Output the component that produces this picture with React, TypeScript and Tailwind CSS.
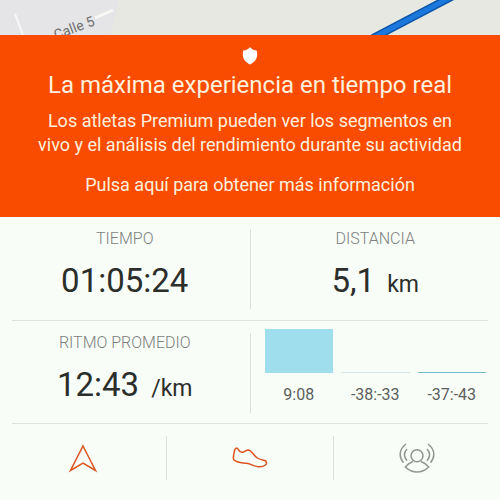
import { useState } from "react";

interface Split {
  pace: string;
  height: number;
  color: string;
}

const splits: Split[] = [
  { pace: "9:08", height: 44, color: "bg-[#9fdfed]" },
  { pace: "-38:-33", height: 1, color: "bg-[#cfe6e4]" },
  { pace: "-37:-43", height: 1, color: "bg-[#6fbfc8]" },
];

function MapStrip() {
  return (
    <svg
      className="block h-[35px] w-full bg-[#e7e8e1]"
      viewBox="0 0 500 35"
      preserveAspectRatio="xMidYMin slice"
      role="img"
      aria-label="Mapa"
    >
      <path d="M0 0H120L110 35H0Z" fill="#e5e5e7" />
      <path d="M15 14L23 35" stroke="#f8f8f8" strokeWidth="2" fill="none" />
      <path d="M95 18L113 10" stroke="#f8f8f5" strokeWidth="3" fill="none" />
      <text
        x="56"
        y="40"
        transform="rotate(-21 56 40)"
        fill="#707070"
        fontSize="14"
        fontFamily="Roboto, sans-serif"
      >
        Calle 5
      </text>
      <path d="M373 38L455 -5" stroke="#0c55a8" strokeWidth="8" fill="none" />
      <path d="M373 38L455 -5" stroke="#1b78dc" strokeWidth="5" fill="none" />
    </svg>
  );
}

function Stat({ label, value, unit }: { label: string; value: string; unit?: string }) {
  return (
    <div className="py-3 text-center">
      <h2 className="text-[16px] font-light leading-5 text-[#7c7f7c]">{label}</h2>
      <p className="mt-2 text-[33px] leading-12 text-[#2b2e2b]">
        {value}
        {unit && <span className="ml-3 text-[23px]">{unit}</span>}
      </p>
    </div>
  );
}

export default function App() {
  const [tab, setTab] = useState("map");

  const tabColor = (name: string) =>
    name === "live" ? "text-[#929592]" : "text-[#dc5420]";

  return (
    <main className="min-h-screen bg-[#f8fdf8] font-[Roboto,sans-serif]">
      <MapStrip />

      <button className="flex h-[182px] w-full flex-col items-center bg-[#fa4c00] pt-3 text-[#fff0dc]">
        <svg className="h-[18px] w-4 text-white" viewBox="0 0 16 18" fill="currentColor" aria-hidden="true">
          <path d="M8 0C9.5 2 12 3.4 14.6 3.6C15 4.6 15.2 6 15.2 8C15 12.5 12 15.5 8 17.5C4 15.5 1 12.5 0.8 8C0.8 6 1 4.6 1.4 3.6C4 3.4 6.5 2 8 0Z" />
        </svg>
        <span className="mt-1 text-[24px] leading-8">
          La máxima experiencia en tiempo real
        </span>
        <span className="mt-2 w-full max-w-[440px] text-[18px] leading-6">
          Los atletas Premium pueden ver los segmentos en vivo y el análisis del
          rendimiento durante su actividad
        </span>
        <span className="mt-4 text-[18px] leading-6">
          Pulsa aquí para obtener más información
        </span>
      </button>

      <section className="grid h-[103px] grid-cols-[1fr_1px_1fr]">
        <Stat label="TIEMPO" value="01:05:24" />
        <div className="my-3 bg-[#dce1dc]" />
        <Stat label="DISTANCIA" value="5,1" unit="km" />
      </section>

      <hr className="mx-3 border-[#dce1dc]" />

      <section className="grid h-[102px] grid-cols-[1fr_1px_1fr]">
        <Stat label="RITMO PROMEDIO" value="12:43" unit="/km" />
        <div className="my-3 bg-[#dce1dc]" />
        <ul className="grid grid-cols-3 gap-2 px-3.5 pt-2">
          {splits.map((split) => (
            <li key={split.pace} className="text-center">
              <div className="flex h-[44px] items-end">
                <div className={`w-full ${split.color}`} style={{ height: split.height }} />
              </div>
              <p className="mt-2 text-[16px] leading-7 text-[#5c5f5c]">{split.pace}</p>
            </li>
          ))}
        </ul>
      </section>

      <hr className="mx-3 border-[#dce1dc]" />

      <nav className="flex h-[76px] divide-x divide-[#dce1dc] pt-3 pb-5">
        <button
          aria-label="Mapa"
          aria-pressed={tab === "map"}
          onClick={() => setTab("map")}
          className={`flex flex-1 items-center justify-center ${tabColor("map")}`}
        >
          <svg className="h-8 w-8" viewBox="0 0 32 32" fill="none" stroke="currentColor" strokeWidth="1.5">
            <path d="M16 4L28.5 28.5L16 21L3.5 28.5Z" />
          </svg>
        </button>
        <button
          aria-label="Deporte"
          aria-pressed={tab === "sport"}
          onClick={() => setTab("sport")}
          className={`flex flex-1 items-center justify-center ${tabColor("sport")}`}
        >
          <svg className="h-8 w-9" viewBox="0 0 36 32" fill="none" stroke="currentColor" strokeWidth="1.5" strokeLinejoin="round">
            <path d="M4.7 6C6.5 5.8 6 9.8 9.7 10.3C12.5 10.7 13.5 8 16.3 8C19.5 8.2 21 13 25.3 16C28 17.8 31.5 17.8 33.4 18.7C35 20 34.8 22 33.4 23C31 25 29 24.9 26.3 24.7C21.5 24.3 19 22 14.7 21.3C10 20.6 6 21 3 18.7C1.5 17.8 1.3 17 1.3 16C1.4 13.5 2 12 2.3 9.7C2.7 7.5 3.4 6.1 4.7 6Z" />
          </svg>
        </button>
        <button
          aria-label="En vivo"
          aria-pressed={tab === "live"}
          onClick={() => setTab("live")}
          className={`flex flex-1 items-center justify-center ${tabColor("live")}`}
        >
          <svg className="h-8 w-9" viewBox="0 0 36 32" fill="none" stroke="currentColor" strokeWidth="1.5">
            <circle cx="18" cy="13.7" r="6" />
            <path d="M14 19.5C11 20.5 8.5 22.5 6.3 25C10 28.5 14 30 18 30C22 30 26 28.5 29.7 25C27.5 22.5 25 20.5 22 19.5" />
            <path d="M8 7C4.8 10.5 4.8 15 8 18.7M28 7C31.2 10.5 31.2 15 28 18.7M7 2C0 7.5 -0.5 15 4.5 20.7M29 2C36 7.5 36.5 15 31.5 20.7" />
          </svg>
        </button>
      </nav>
    </main>
  );
}
